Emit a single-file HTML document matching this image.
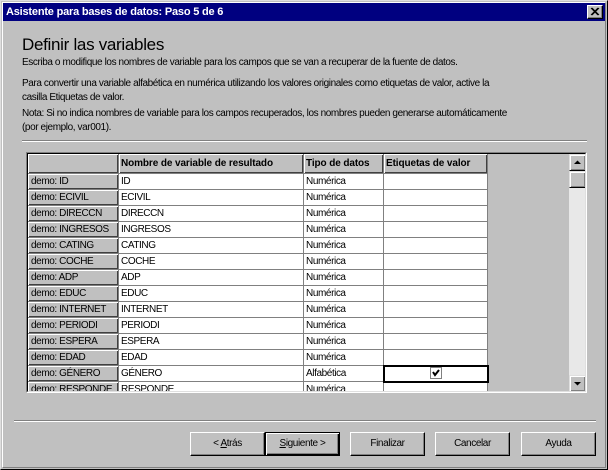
<!DOCTYPE html>
<html><head><meta charset="utf-8"><style>
*{margin:0;padding:0;box-sizing:border-box}
body{width:608px;height:470px;background:#c0c0c0;font-family:"Liberation Sans",sans-serif;font-size:10px;letter-spacing:-0.4px;color:#000;position:relative;overflow:hidden}
.a{position:absolute;white-space:nowrap}
.win{position:absolute;left:0;top:0;width:608px;height:470px;border:1px solid;border-color:#dfdfdf #000 #000 #dfdfdf}
.win2{position:absolute;left:1px;top:1px;right:1px;bottom:1px;border:1px solid;border-color:#fff #808080 #808080 #fff}
.tb{position:absolute;left:3px;top:3px;width:602px;height:18px;background:#000080;color:#fff;font-weight:bold;font-size:11px;letter-spacing:-0.2px;line-height:18px;padding-left:3px}
.x{position:absolute;right:5px;top:5px;width:16px;height:14px;background:#c0c0c0;border:1px solid;border-color:#fff #000 #000 #fff;box-shadow:inset -1px -1px #808080}
.sep{position:absolute;height:2px;border-top:1px solid #808080;border-bottom:1px solid #fff}
.grid{position:absolute;left:26px;top:152px;width:561px;height:241px;border:1px solid;border-color:#808080 #fff #fff #808080;overflow:hidden}
.gi{position:absolute;left:0;top:0;width:559px;height:239px;border:1px solid;border-color:#000 #dfdfdf #dfdfdf #000;overflow:hidden;background:#c0c0c0}
table{border-collapse:collapse;position:absolute;left:-1px;top:-1px;table-layout:fixed;width:460px}
td{height:16px;border:1px solid #808080;padding:0 2px;line-height:14px;white-space:nowrap;overflow:hidden;background:#fff}
td.h{background:#c0c0c0;box-shadow:inset 1px 1px #fff,inset -1px -1px #404040;padding-left:3px}
tr.hd td{height:20px;font-weight:bold;background:#c0c0c0;box-shadow:inset 1px 1px #fff,inset -1px -1px #404040;letter-spacing:-0.1px}
.sb{position:absolute;left:541px;top:0;width:17px;height:238px;background:#e8e8e8}
.sbb{position:absolute;left:0;width:17px;height:17px;background:#c0c0c0;border:1px solid;border-color:#dfdfdf #000 #000 #dfdfdf;box-shadow:inset 1px 1px #fff,inset -1px -1px #808080}
.btn{position:absolute;top:432px;width:75px;height:24px;background:#c0c0c0;border:1px solid;border-color:#fff #000 #000 #fff;box-shadow:inset -1px -1px #808080;text-align:center;line-height:21px}
.def{border:1px solid #000;box-shadow:inset 1px 1px #fff,inset -1px -1px #000,inset -2px -2px #808080}
</style></head><body>
<div class="win"><div class="win2"></div></div>
<div class="tb">Asistente para bases de datos: Paso 5 de 6</div>
<div class="x"><svg width="14" height="12" style="position:absolute;left:0;top:0"><path d="M3 2L10 9M4 2L11 9M10 2L3 9M11 2L4 9" stroke="#000" stroke-width="1"/></svg></div>
<div class="a" style="left:22px;top:35px;font-size:17px;letter-spacing:-0.3px">Definir las variables</div>
<div class="a" style="left:22px;top:57px">Escriba o modifique los nombres de variable para los campos que se van a recuperar de la fuente de datos.</div>
<div class="a" style="left:22px;top:78px">Para convertir una variable alfabética en numérica utilizando los valores originales como etiquetas de valor, active la</div>
<div class="a" style="left:22px;top:92px">casilla Etiquetas de valor.</div>
<div class="a" style="left:22px;top:108px">Nota: Si no indica nombres de variable para los campos recuperados, los nombres pueden generarse automáticamente</div>
<div class="a" style="left:22px;top:122px">(por ejemplo, var001).</div>
<div class="sep" style="left:22px;top:140px;width:565px"></div>
<div class="grid"><div class="gi">
<table>
<colgroup><col style="width:91px"><col style="width:185px"><col style="width:80px"><col style="width:104px"></colgroup>
<tr class="hd"><td></td><td>Nombre de variable de resultado</td><td>Tipo de datos</td><td>Etiquetas de valor</td></tr>
<tr><td class="h">demo: ID</td><td>ID</td><td>Numérica</td><td></td></tr>
<tr><td class="h">demo: ECIVIL</td><td>ECIVIL</td><td>Numérica</td><td></td></tr>
<tr><td class="h">demo: DIRECCN</td><td>DIRECCN</td><td>Numérica</td><td></td></tr>
<tr><td class="h">demo: INGRESOS</td><td>INGRESOS</td><td>Numérica</td><td></td></tr>
<tr><td class="h">demo: CATING</td><td>CATING</td><td>Numérica</td><td></td></tr>
<tr><td class="h">demo: COCHE</td><td>COCHE</td><td>Numérica</td><td></td></tr>
<tr><td class="h">demo: ADP</td><td>ADP</td><td>Numérica</td><td></td></tr>
<tr><td class="h">demo: EDUC</td><td>EDUC</td><td>Numérica</td><td></td></tr>
<tr><td class="h">demo: INTERNET</td><td>INTERNET</td><td>Numérica</td><td></td></tr>
<tr><td class="h">demo: PERIODI</td><td>PERIODI</td><td>Numérica</td><td></td></tr>
<tr><td class="h">demo: ESPERA</td><td>ESPERA</td><td>Numérica</td><td></td></tr>
<tr><td class="h">demo: EDAD</td><td>EDAD</td><td>Numérica</td><td></td></tr>
<tr><td class="h">demo: GÉNERO</td><td>GÉNERO</td><td>Alfabética</td><td style="border:2px solid #000;text-align:center;padding:0"><svg width="12" height="12" style="vertical-align:middle"><rect x="0.5" y="0.5" width="11" height="11" fill="#fff" stroke="#808080"/><path d="M3 5L5 8L9 3" stroke="#000" stroke-width="2" fill="none"/></svg></td></tr>
<tr><td class="h">demo: RESPONDE</td><td>RESPONDE</td><td>Numérica</td><td></td></tr>
</table>
<div class="sb">
<div class="sbb" style="top:0"><svg width="15" height="15" style="position:absolute;left:0;top:0"><path d="M4 9L11 9L7.5 5.5Z" fill="#000"/></svg></div>
<div class="sbb" style="top:17px"></div>
<div class="sbb" style="top:221px"><svg width="15" height="15" style="position:absolute;left:0;top:0"><path d="M4 6L11 6L7.5 9.5Z" fill="#000"/></svg></div>
</div>
</div></div>
<div class="sep" style="left:14px;top:420px;width:582px"></div>
<div class="btn" style="left:190px">&lt; <u>A</u>trás</div>
<div class="btn def" style="left:265px"><u>S</u>iguiente &gt;</div>
<div class="btn" style="left:350px">Finalizar</div>
<div class="btn" style="left:435px">Cancelar</div>
<div class="btn" style="left:521px">Ayuda</div>
</body></html>
